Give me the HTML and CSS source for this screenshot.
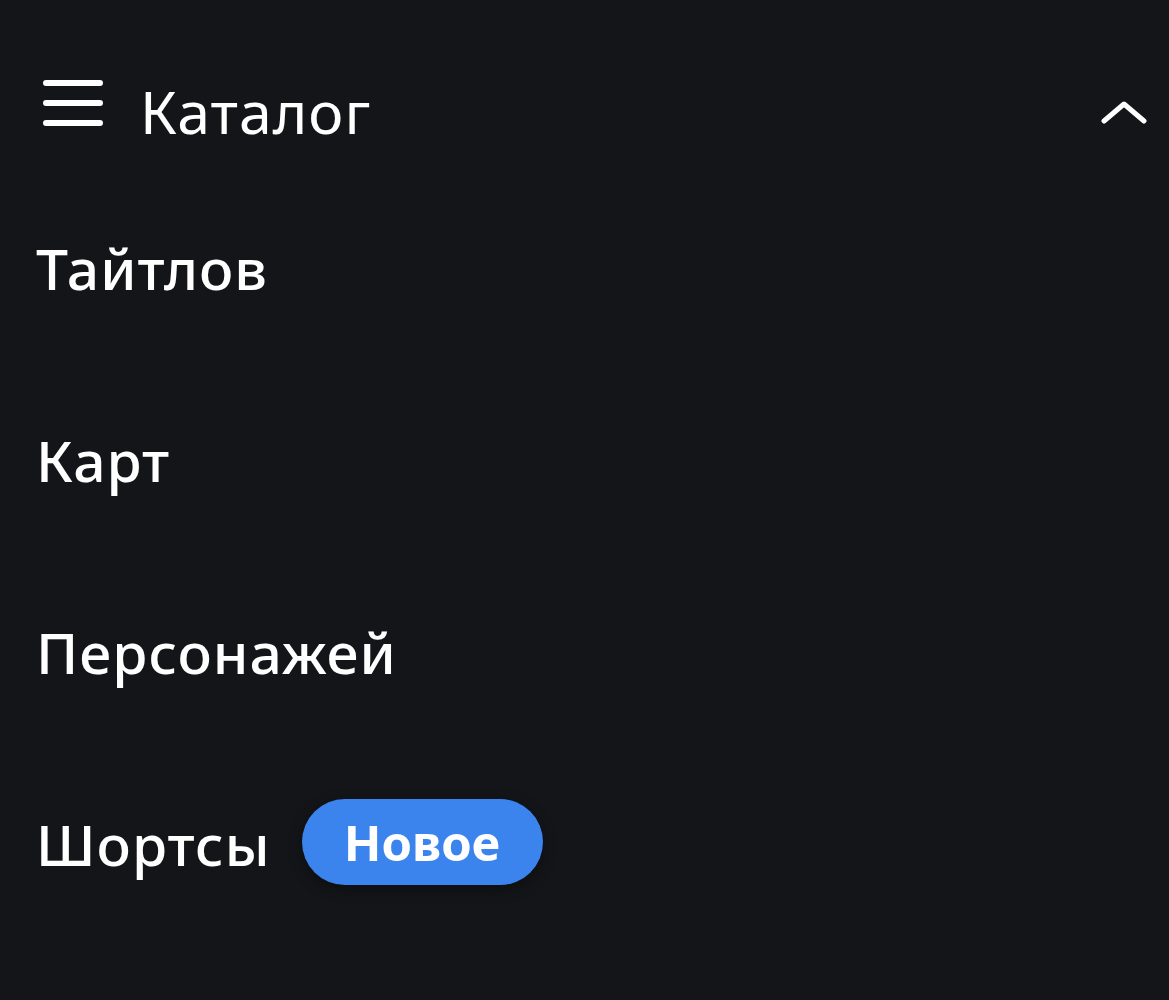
FILE: index.html
```html
<!DOCTYPE html>
<html>
  <head>
    <meta charset="utf-8" />
    <title>Каталог</title>
    <link rel="stylesheet" href="styles.css">
  </head>

  <body>
    <div id="menu">
      <div class="menu-head">
        <svg class="burger" width="60" height="48" viewBox="0 0 60 48">
          <path d="M3 4H57M3 24H57M3 44H57" stroke="#fff" stroke-width="6" stroke-linecap="round" fill="none" />
        </svg>
        <span class="menu-title">Каталог</span>
        <svg class="chevron" width="46" height="26" viewBox="0 0 46 26">
          <path d="M3 22L23 5L43 22" stroke="#fff" stroke-width="5" stroke-linecap="round" stroke-linejoin="round" fill="none" />
        </svg>
      </div>
      <ul class="menu-list">
        <li>Тайтлов</li>
        <li>Карт</li>
        <li>Персонажей</li>
        <li>Шортсы <span class="badge">Новое</span></li>
      </ul>
    </div>
  </body>
</html>
```

FILE: styles.css
```css
body {
  margin: 0;
  background: #141518;
  color: #fff;
  font-family: "Noto Sans", "Open Sans", sans-serif;
}
#menu {
  width: 100%;
}
.menu-head {
  display: flex;
  align-items: center;
  height: 122px;
  margin-top: 50px;
  padding-left: 43px;
  padding-right: 22px;
}
.burger {
  margin-top: -16px;
}
.menu-title {
  margin-left: 37px;
  font-size: 59px;
  letter-spacing: 1px;
  flex: 1;
}
.chevron {
  margin-top: 2px;
}
.menu-list {
  list-style: none;
  margin: 0;
  padding: 0 0 0 36px;
}
.menu-list li {
  display: flex;
  align-items: center;
  height: 192px;
  font-size: 57px;
  font-weight: 500;
  letter-spacing: 1px;
}
.badge {
  display: inline-flex;
  align-items: center;
  justify-content: center;
  margin-left: 31px;
  margin-top: -4px;
  width: 241px;
  height: 86px;
  border-radius: 43px;
  background: #3b84ee;
  font-size: 49px;
  font-weight: 700;
  letter-spacing: 0;
  box-shadow: 0 4px 14px rgba(0, 0, 0, 0.35);
}
```
